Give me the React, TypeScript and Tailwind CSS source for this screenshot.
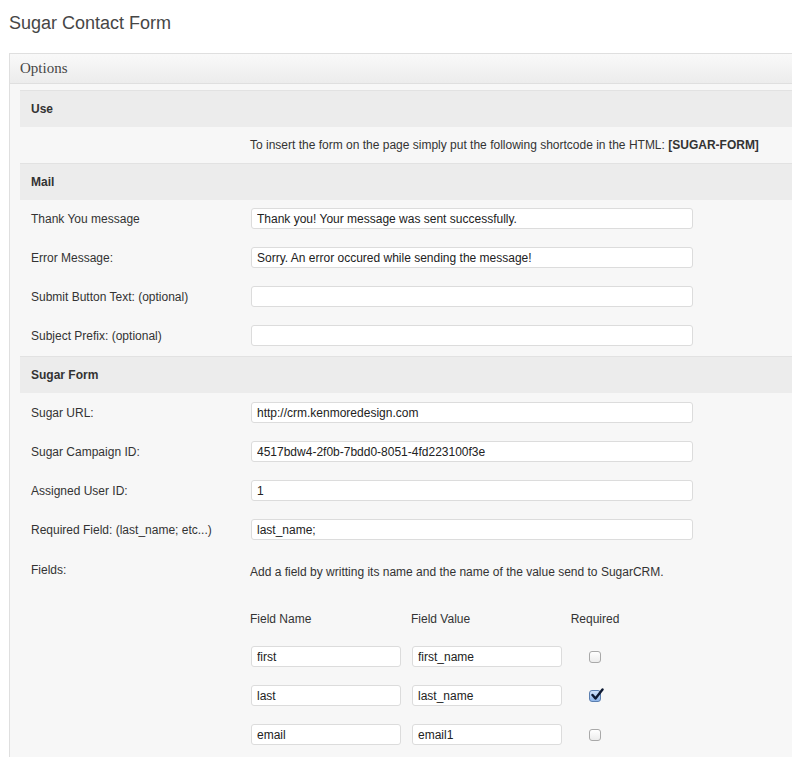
import React from 'react';

const font = { fontFamily: '"Liberation Sans", Arial, sans-serif' };

function TextInput({ value = '', className = 'w-[442px] h-[21px]' }: { value?: string; className?: string }) {
  return (
    <input
      type="text"
      defaultValue={value}
      className={`${className} rounded-[3px] border border-[#dcdcdc] bg-white px-[5px] text-[12px] text-[#222] outline-none`}
    />
  );
}

function Checkbox({ checked = false }: { checked?: boolean }) {
  return (
    <span
      className={`relative flex h-[12px] w-[12px] items-center justify-center rounded-[3px] border ${
        checked ? 'border-[#5b7fb0] bg-gradient-to-b from-[#cfe2fb] to-[#8fb5e8]' : 'border-[#a9a9a9] bg-gradient-to-b from-white to-[#ececec]'
      }`}
    >
      {checked && (
        <svg className="absolute -top-[3px] left-[1px] h-[13px] w-[13px]" viewBox="0 0 13 13">
          <path d="M1.5 7 L4.5 10.5 L11.5 1.5" fill="none" stroke="#0e1a33" strokeWidth={2.4} strokeLinecap="round" strokeLinejoin="round" />
        </svg>
      )}
    </span>
  );
}

function SectionHeader({ title }: { title: string }) {
  return (
    <div className="flex h-[37px] items-center border-t border-[#e2e2e2] bg-[#ececec] pl-[11px] text-[12px] font-bold text-[#333]">
      {title}
    </div>
  );
}

function Row({ label, value }: { label: string; value?: string }) {
  return (
    <div className="flex h-[39px] items-start pt-[8px]">
      <div className="flex h-[21px] w-[231px] items-center pl-[11px] text-[12px] text-[#333]">{label}</div>
      <TextInput value={value} />
    </div>
  );
}

const fieldRows = [
  { name: 'first', value: 'first_name', required: false },
  { name: 'last', value: 'last_name', required: true },
  { name: 'email', value: 'email1', required: false },
];

export default function App() {
  return (
    <div className="min-h-[757px] w-[792px] overflow-hidden bg-white" style={font}>
      <h1 className="h-[53px] pl-[9px] pt-[10px] text-[18px] font-normal text-[#464646]">Sugar Contact Form</h1>

      <div className="ml-[9px] w-[800px] border-l border-t border-[#dfdfdf] bg-[#f7f7f7]">
        <div
          className="flex h-[30px] items-center border-b border-[#dfdfdf] bg-gradient-to-b from-[#f9f9f9] to-[#ececec] pl-[10px] text-[15px] text-[#464646]"
          style={{ fontFamily: '"Liberation Serif", Georgia, serif' }}
        >
          Options
        </div>

        <div className="pl-[10px] pt-[6px]">
          <SectionHeader title="Use" />
          <div className="flex h-[36px] items-center text-[12px] text-[#333]">
            <div className="w-[230px]" />
            <span>
              To insert the form on the page simply put the following shortcode in the HTML: <b>[SUGAR-FORM]</b>
            </span>
          </div>

          <SectionHeader title="Mail" />
          <Row label="Thank You message" value="Thank you! Your message was sent successfully." />
          <Row label="Error Message:" value="Sorry. An error occured while sending the message!" />
          <Row label="Submit Button Text: (optional)" />
          <Row label="Subject Prefix: (optional)" />

          <SectionHeader title="Sugar Form" />
          <div className="pt-[1px]">
            <Row label="Sugar URL:" value="http://crm.kenmoredesign.com" />
            <Row label="Sugar Campaign ID:" value="4517bdw4-2f0b-7bdd0-8051-4fd223100f3e" />
            <Row label="Assigned User ID:" value="1" />
            <Row label="Required Field: (last_name; etc...)" value="last_name;" />
          </div>

          <div className="flex pt-[10px] text-[12px] text-[#333]">
            <div className="w-[231px] pl-[11px] pt-[1px]">Fields:</div>
            <div className="-ml-[1px]">
              <div className="pt-[3px]">Add a field by writting its name and the name of the value send to SugarCRM.</div>
              <div className="flex pt-[29px]">
                <div className="w-[161px]">Field Name</div>
                <div className="w-[158px]">Field Value</div>
                <div className="w-[52px] text-center">Required</div>
              </div>
              <div className="flex flex-col gap-[18px] pt-[18px]">
                {fieldRows.map((r) => (
                  <div key={r.name} className="flex items-center">
                    <div className="w-[1px]" />
                    <TextInput value={r.name} className="h-[21px] w-[150px]" />
                    <div className="w-[11px]" />
                    <TextInput value={r.value} className="h-[21px] w-[150px]" />
                    <div className="flex w-[66px] justify-center">
                      <Checkbox checked={r.required} />
                    </div>
                  </div>
                ))}
              </div>
              <div className="h-[20px]" />
            </div>
          </div>
        </div>
      </div>
    </div>
  );
}
